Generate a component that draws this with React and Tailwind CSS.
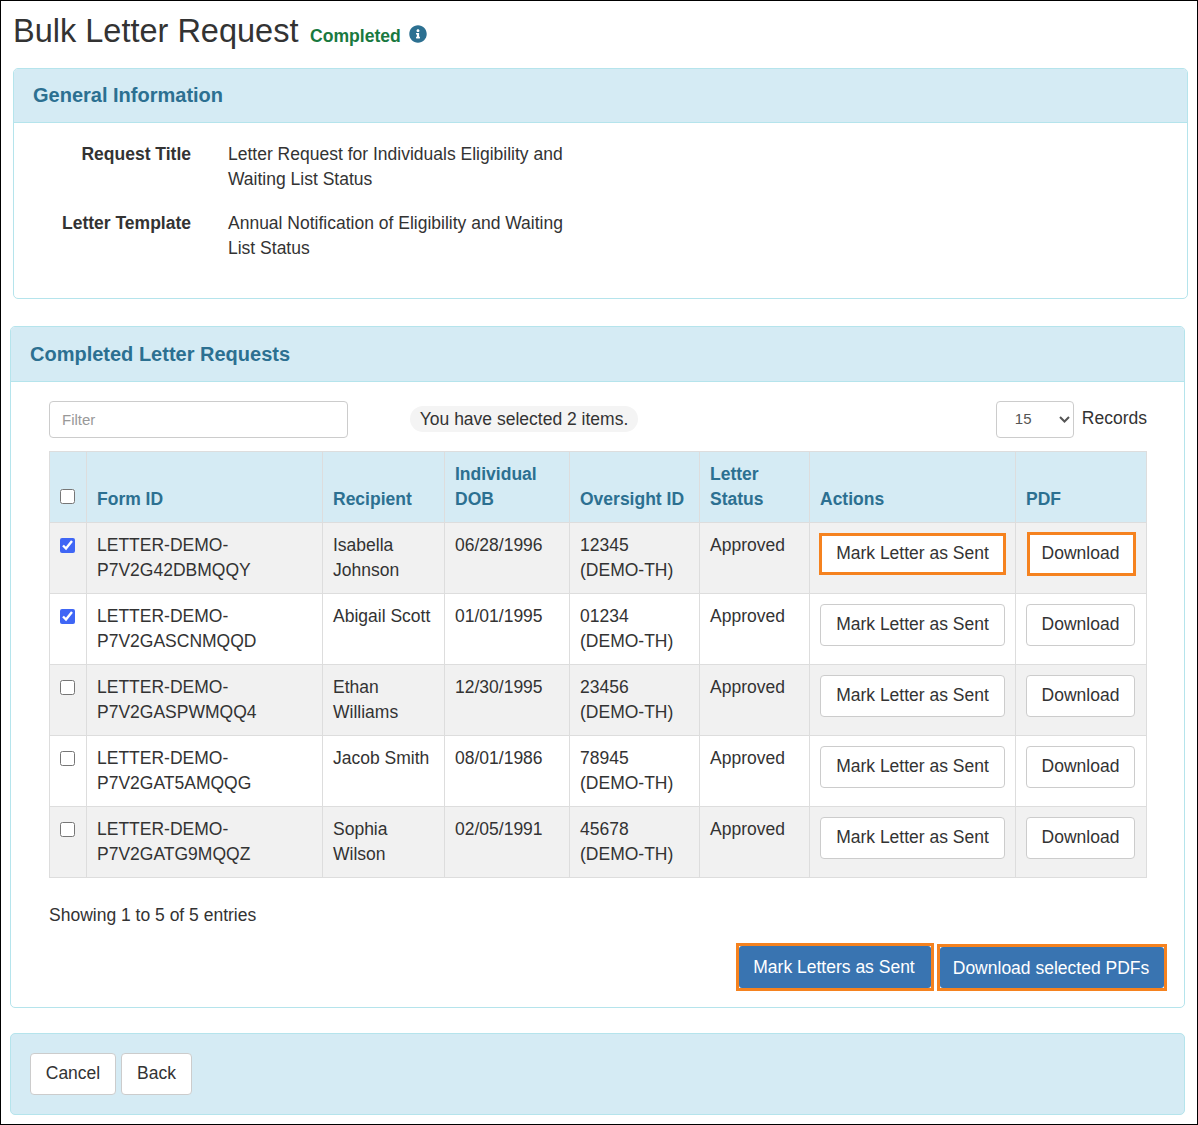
import React from "react";
import { FaInfoCircle } from "react-icons/fa";

const rows = [
  { id: "P7V2G42DBMQQY", name: ["Isabella", "Johnson"], dob: "06/28/1996", code: "12345", checked: true, marked: true },
  { id: "P7V2GASCNMQQD", name: ["Abigail Scott"], dob: "01/01/1995", code: "01234", checked: true },
  { id: "P7V2GASPWMQQ4", name: ["Ethan", "Williams"], dob: "12/30/1995", code: "23456" },
  { id: "P7V2GAT5AMQQG", name: ["Jacob Smith"], dob: "08/01/1986", code: "78945" },
  { id: "P7V2GATG9MQQZ", name: ["Sophia", "Wilson"], dob: "02/05/1991", code: "45678" },
];

const td = "border border-[#dddddd] align-top leading-[25px]";
const cell = `${td} px-[10px] pt-[10px]`;
const head = "border border-[#dddddd] px-[10px] pb-[10px] align-bottom text-left font-bold leading-[25px] text-[#2c7091]";
const btn = "h-[42px] rounded-[4px] border border-[#cccccc] bg-white text-[#333333] leading-none";
const blueBtn = "w-full h-full rounded-[3px] bg-[#3974b1] pt-[2px] pr-[2px] text-white leading-none";

const App = () => {
  return (
    <div className="w-[1198px] h-[1125px] border border-black bg-white font-['Liberation_Sans',Arial,sans-serif] text-[17.5px] text-[#333333]">
      <div className="flex items-baseline pl-[12px] pt-[8px] h-[67px]">
        <h1 className="text-[32.5px] leading-[44px]">Bulk Letter Request</h1>
        <span className="ml-[11.5px] text-[17.6px] font-bold text-[#19793f]">Completed</span>
        <FaInfoCircle className="ml-[8px] self-start mt-[16px] text-[18px] text-[#2c7091]" />
      </div>

      <section className="ml-[12px] w-[1175px] h-[231px] rounded-[5px] border border-[#b5e4ec]">
        <div className="h-[54px] flex items-center pl-[19px] pb-[2px] rounded-t-[4px] border-b border-[#b5e4ec] bg-[#d5ebf4] text-[20px] font-bold text-[#2c7091]">
          General Information
        </div>
        <dl className="grid grid-cols-[177px_340px] gap-x-[37px] gap-y-[19px] pt-[19px] leading-[25px]">
          <dt className="text-right font-bold">Request Title</dt>
          <dd>Letter Request for Individuals Eligibility and Waiting List Status</dd>
          <dt className="text-right font-bold">Letter Template</dt>
          <dd>Annual Notification of Eligibility and Waiting List Status</dd>
        </dl>
      </section>

      <section className="mt-[27px] ml-[9px] w-[1175px] h-[682px] rounded-[5px] border border-[#b5e4ec]">
        <div className="h-[55px] flex items-center pl-[19px] rounded-t-[4px] border-b border-[#b5e4ec] bg-[#d5ebf4] text-[20px] font-bold text-[#2c7091]">
          Completed Letter Requests
        </div>
        <div className="pl-[38px] pr-[37px] pt-[19px]">
          <div className="flex items-start h-[50px]">
            <input
              placeholder="Filter"
              className="w-[299px] h-[37px] rounded-[4px] border border-[#cccccc] px-[12px] text-[15px] placeholder:text-[#999999]"
            />
            <span className="ml-[62px] mt-[5px] pt-[2px] h-[26px] w-[228px] flex items-center justify-center rounded-full bg-[#f4f4f4] leading-none">
              You have selected 2 items.
            </span>
            <div className="relative ml-auto w-[78px] h-[37px]">
              <select className="w-full h-full appearance-none rounded-[4px] border border-[#cccccc] bg-white pl-[18px] text-[15px] text-[#555555]">
                <option>15</option>
              </select>
              <svg viewBox="0 0 11 7" className="absolute right-[4px] top-[15px] w-[11px] h-[7px] pointer-events-none">
                <path d="M1 1l4.5 4.5L10 1" fill="none" stroke="#555555" strokeWidth="2" />
              </svg>
            </div>
            <span className="ml-[8px] leading-[34px]">Records</span>
          </div>

          <table className="w-[1097px] table-fixed border-collapse">
            <colgroup>
              <col className="w-[37px]" />
              <col className="w-[236px]" />
              <col className="w-[122px]" />
              <col className="w-[125px]" />
              <col className="w-[130px]" />
              <col className="w-[110px]" />
              <col className="w-[206px]" />
              <col className="w-[131px]" />
            </colgroup>
            <thead>
              <tr className="h-[71px] bg-[#d5ebf4]">
                <th className="border border-[#dddddd] align-bottom pb-[18px]">
                  <input type="checkbox" className="block ml-[10px] w-[15px] h-[15px]" readOnly />
                </th>
                <th className={head}>Form ID</th>
                <th className={head}>Recipient</th>
                <th className={head}>Individual DOB</th>
                <th className={head}>Oversight ID</th>
                <th className={head}>Letter Status</th>
                <th className={head}>Actions</th>
                <th className={head}>PDF</th>
              </tr>
            </thead>
            <tbody>
              {rows.map((row, i) => (
                <tr key={row.id} className={`h-[71px] ${i % 2 === 0 ? "bg-[#f1f1f1]" : "bg-white"}`}>
                  <td className={`${td} pt-[15px]`}>
                    <input
                      type="checkbox"
                      defaultChecked={row.checked}
                      className="block ml-[10px] w-[15px] h-[15px] accent-[#3f66f5]"
                    />
                  </td>
                  <td className={cell}>
                    LETTER-DEMO-
                    <br />
                    {row.id}
                  </td>
                  <td className={cell}>
                    {row.name.map((n) => (
                      <div key={n}>{n}</div>
                    ))}
                  </td>
                  <td className={cell}>{row.dob}</td>
                  <td className={cell}>
                    {row.code}
                    <br />
                    (DEMO-TH)
                  </td>
                  <td className={cell}>Approved</td>
                  <td className={cell}>
                    {row.marked ? (
                      <button className={`${btn} block w-[187px] h-[42px] -ml-px border-[3px] !border-[#f5821f] rounded-none`}>
                        Mark Letter as Sent
                      </button>
                    ) : (
                      <button className={`${btn} block w-[185px]`}>Mark Letter as Sent</button>
                    )}
                  </td>
                  <td className={cell}>
                    {row.marked ? (
                      <button className={`${btn} block w-[109px] h-[44px] ml-px -mt-px border-[3px] !border-[#f5821f] rounded-none pr-[2px]`}>
                        Download
                      </button>
                    ) : (
                      <button className={`${btn} block w-[109px]`}>Download</button>
                    )}
                  </td>
                </tr>
              ))}
            </tbody>
          </table>

          <p className="mt-[25px] leading-[25px]">Showing 1 to 5 of 5 entries</p>

          <div className="flex justify-end gap-[3px] mt-[15px] -mr-[20px]">
            <div className="w-[198px] h-[48px] border-[3px] border-[#f5821f] bg-white">
              <button className={blueBtn}>Mark Letters as Sent</button>
            </div>
            <div className="w-[230px] h-[47px] mt-px border-[3px] border-[#f5821f] bg-white">
              <button className={blueBtn}>Download selected PDFs</button>
            </div>
          </div>
        </div>
      </section>

      <section className="mt-[25px] ml-[9px] w-[1175px] h-[82px] flex items-center gap-[5px] pl-[19px] rounded-[5px] border border-[#b5e4ec] bg-[#d5ebf4]">
        <button className={`${btn} w-[86px]`}>Cancel</button>
        <button className={`${btn} w-[71px]`}>Back</button>
      </section>
    </div>
  );
};

export default App;
